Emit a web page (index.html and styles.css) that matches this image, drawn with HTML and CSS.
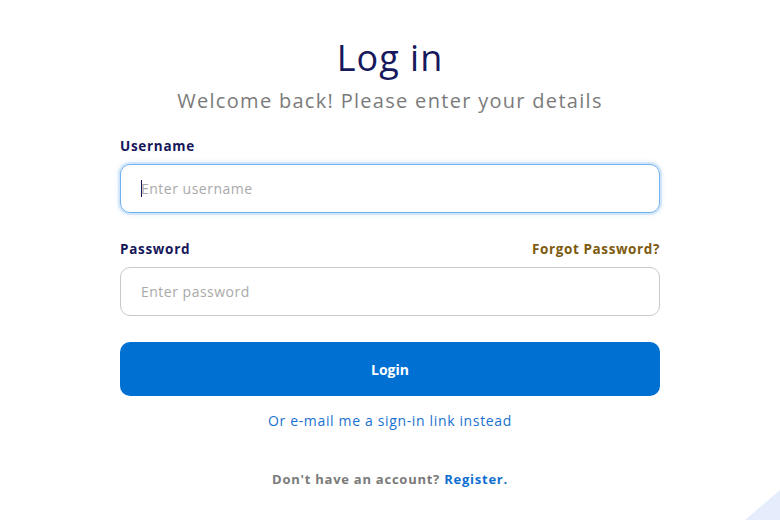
FILE: index.html
```html
<!DOCTYPE html>
<html lang="en">
<head>
<meta charset="utf-8">
<title>Log in</title>
<link rel="stylesheet" href="styles.css">
</head>
<body>
<main class="page">
  <section class="card">
    <h1 class="title">Log in</h1>
    <p class="subtitle">Welcome back! Please enter your details</p>
    <form class="form">
      <div class="field">
        <div class="label-row"><label class="label" for="u">Username</label></div>
        <div class="input focused"><span class="caret"></span><span class="placeholder">Enter username</span></div>
      </div>
      <div class="field">
        <div class="label-row"><label class="label" for="p">Password</label><a class="forgot" href="#">Forgot Password?</a></div>
        <div class="input"><span class="placeholder">Enter password</span></div>
      </div>
      <button type="button" class="btn">Login</button>
      <a class="magic" href="#">Or e-mail me a sign-in link instead</a>
      <p class="register">Don't have an account? <a href="#">Register.</a></p>
    </form>
  </section>
  <div class="corner"></div>
</main>
</body>
</html>
```
FILE: styles.css
```css
* { box-sizing: border-box; }
html, body { margin: 0; padding: 0; background: #fff; }
body { font-family: "Open Sans", "Liberation Sans", sans-serif; width: 780px; height: 520px; overflow: hidden; }
.page { position: relative; width: 780px; height: 520px; display: flex; justify-content: center; }
.card { width: 540px; display: flex; flex-direction: column; align-items: stretch; padding-top: 36px; }
.title { margin: 0; text-align: center; font-weight: 500; font-size: 36px; line-height: 44px; color: #16195c; letter-spacing: 1px; }
.subtitle { margin: 8px 0 0; text-align: center; font-size: 20px; line-height: 26px; color: #7b7b7b; letter-spacing: 1.3px; }
.form { display: flex; flex-direction: column; margin-top: 22px; }
.field { display: flex; flex-direction: column; margin-bottom: 26px; }
.label-row { display: flex; justify-content: space-between; align-items: center; height: 20px; margin-bottom: 8px; }
.label { font-weight: 700; font-size: 13.5px; color: #15175a; letter-spacing: 0.7px; }
.forgot { font-weight: 700; font-size: 13.5px; color: #7d5a0f; text-decoration: none; letter-spacing: 0.6px; }
.input { height: 49px; border: 1px solid #c9c9c9; border-radius: 10px; display: flex; align-items: center; padding-left: 20px; }
.input.focused { border-color: #6fb1ee; box-shadow: 0 0 0 2px rgba(140,190,240,0.25), 0 0 6px rgba(100,170,240,0.35); }
.caret { width: 1px; height: 17px; background: #16195c; margin-right: -1px; }
.placeholder { font-size: 14px; color: #a9a9a9; letter-spacing: 0.5px; }
.btn { height: 54px; border: none; border-radius: 10px; background: #0071d3; color: #fff; font-family: inherit; font-weight: 700; font-size: 14px; margin-top: 0; }
.magic { margin-top: 15px; text-align: center; font-size: 14px; color: #1872d0; text-decoration: none; line-height: 20px; letter-spacing: 0.65px; }
.register { margin: 38px 0 0; text-align: center; font-weight: 700; font-size: 13px; color: #7a7a7a; line-height: 20px; letter-spacing: 0.75px; }
.register a { color: #0f6fd0; text-decoration: none; }
.corner { position: absolute; right: 0; bottom: 0; width: 0; height: 0; border-style: solid; border-width: 0 0 30px 35px; border-color: transparent transparent #e5edfc transparent; }
```
